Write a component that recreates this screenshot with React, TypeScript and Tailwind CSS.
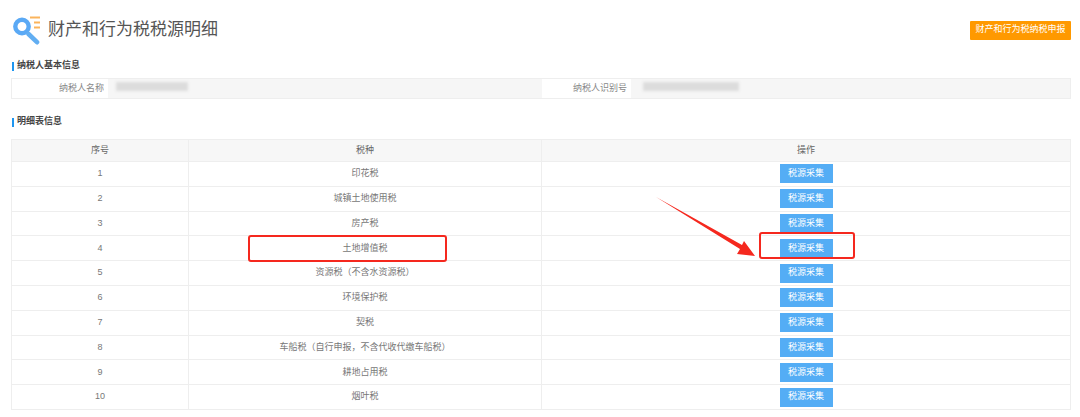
import React from 'react';

const TAXES = [
  '印花税',
  '城镇土地使用税',
  '房产税',
  '土地增值税',
  '资源税（不含水资源税）',
  '环境保护税',
  '契税',
  '车船税（自行申报，不含代收代缴车船税）',
  '耕地占用税',
  '烟叶税',
];

const FONT = "font-['Liberation_Sans','Noto_Sans_CJK_SC',sans-serif]";

const SectionTitle: React.FC<{ children: React.ReactNode }> = ({ children }) => (
  <div className="flex items-center h-[12px] pl-[1px]">
    <div className="w-[2px] h-[9px] bg-[#1e96f0] mr-[3px]"></div>
    <span className="text-[9px] font-bold text-[#444]">{children}</span>
  </div>
);

const SearchIcon = () => (
  <svg width="30" height="30" viewBox="0 0 30 30" fill="none">
    <circle cx="10" cy="11.5" r="6.7" stroke="#5aa9f5" strokeWidth="4.4" />
    <path d="M16.5 19 L25 27.2" stroke="#62aef2" strokeWidth="4.6" strokeLinecap="round" />
    <path d="M18 2.5 H28" stroke="#fbb45c" strokeWidth="2" />
    <path d="M22 7.5 H28" stroke="#fbb45c" strokeWidth="2" />
    <path d="M22 12.5 H28" stroke="#fbb45c" strokeWidth="2" />
  </svg>
);

const App: React.FC = () => {
  return (
    <div className={`relative w-[1080px] h-[417px] overflow-hidden bg-white ${FONT}`}>
      {/* Header */}
      <div className="flex items-center justify-between h-[60px] pl-[12px] pr-[9px]">
        <div className="flex items-center">
          <SearchIcon />
          <h1 className="ml-[6px] text-[17px] font-normal text-[#555]">财产和行为税税源明细</h1>
        </div>
        <button className="w-[101px] h-[19px] bg-[#ff9900] text-white text-[9px] rounded-[1px]">财产和行为税纳税申报</button>
      </div>

      <div className="px-[11px] pr-[9px]">
        {/* Basic info */}
        <SectionTitle>纳税人基本信息</SectionTitle>
        <div className="mt-[6px] grid grid-cols-[96px_434px_89px_1fr] h-[21px] border border-[#eeeeee] text-[9px] text-[#888]">
          <div className="flex items-center justify-end pr-[4px] bg-white">纳税人名称</div>
          <div className="relative bg-[#f6f6f6]">
            <div className="absolute left-[8px] top-[3px] w-[72px] h-[9px] bg-[#dcdcdc] blur-[1.5px]"></div>
          </div>
          <div className="flex items-center justify-end pr-[4px] bg-white">纳税人识别号</div>
          <div className="relative bg-[#f6f6f6]">
            <div className="absolute left-[12px] top-[3px] w-[96px] h-[9px] bg-[#dcdcdc] blur-[1.5px]"></div>
          </div>
        </div>

        {/* Detail table */}
        <div className="mt-[17px]">
          <SectionTitle>明细表信息</SectionTitle>
        </div>
        <div className="mt-[11px] border border-[#eeeeee] text-[9px] text-[#777]">
          <div className="grid grid-cols-[177px_353px_1fr] h-[21px] bg-[#f7f7f7] text-[#666]">
            <div className="flex items-center justify-center border-r border-[#eeeeee]">序号</div>
            <div className="flex items-center justify-center border-r border-[#eeeeee]">税种</div>
            <div className="flex items-center justify-center">操作</div>
          </div>
          {TAXES.map((tax, i) => (
            <div key={tax} className="grid grid-cols-[177px_353px_1fr] h-[24.8px] border-t border-[#eeeeee]">
              <div className="flex items-center justify-center border-r border-[#eeeeee]">{i + 1}</div>
              <div className="flex items-center justify-center border-r border-[#eeeeee]">{tax}</div>
              <div className="flex items-center justify-center">
                <button className="w-[53px] h-[19px] bg-[#54adf5] text-white text-[9px]">税源采集</button>
              </div>
            </div>
          ))}
        </div>
      </div>

      {/* Red annotations */}
      <div className="absolute left-[248px] top-[235px] w-[199px] h-[27px] border-2 border-[#f5281e] rounded-[3px]"></div>
      <div className="absolute left-[759px] top-[232px] w-[96px] h-[27px] border-2 border-[#f5281e] rounded-[3px]"></div>
      <svg className="absolute left-0 top-0" width="1080" height="417" fill="none">
        <polygon points="656,197 742,245 744,241 755,256 737,254 740,249" fill="#f5281e" />
      </svg>
    </div>
  );
};

export default App;
